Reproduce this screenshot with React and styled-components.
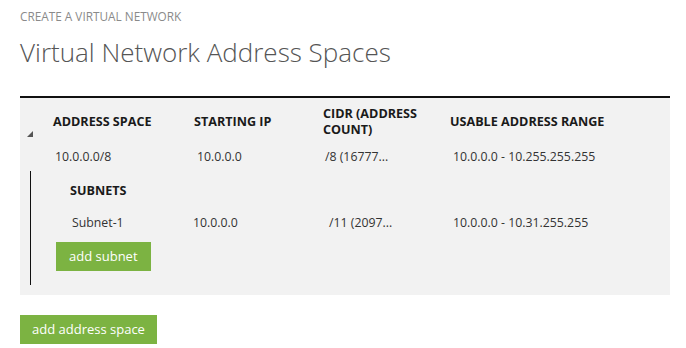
import React from 'react'
import styled, { createGlobalStyle } from 'styled-components'

const GlobalStyle = createGlobalStyle`
  html, body {
    margin: 0;
    padding: 0;
    background: #fff;
  }
  body {
    font-family: "Open Sans", "Noto Sans", "Liberation Sans", sans-serif;
    color: #333;
  }
`

const addressSpaces = [
  {
    space: '10.0.0.0/8',
    start: '10.0.0.0',
    cidr: '/8 (16777...',
    range: '10.0.0.0 - 10.255.255.255',
    subnets: [
      { name: 'Subnet-1', start: '10.0.0.0', cidr: '/11 (2097...', range: '10.0.0.0 - 10.31.255.255' },
    ],
  },
]

function App() {
  return (
    <Page>
      <GlobalStyle />
      <Eyebrow>CREATE A VIRTUAL NETWORK</Eyebrow>
      <Title>Virtual Network Address Spaces</Title>
      {addressSpaces.map(a => (
        <Panel key={a.space}>
          <HeadRow>
            <Toggle>
              <svg width="6" height="6" viewBox="0 0 6 6">
                <polygon points="6,0 6,6 0,6" fill="#555" />
              </svg>
            </Toggle>
            <HeadCell>ADDRESS SPACE</HeadCell>
            <HeadCell>STARTING IP</HeadCell>
            <HeadCell>CIDR (ADDRESS<br />COUNT)</HeadCell>
            <HeadCell>USABLE ADDRESS RANGE</HeadCell>
          </HeadRow>
          <DataRow>
            <span />
            <Cell $shift={2}>{a.space}</Cell>
            <Cell $shift={3}>{a.start}</Cell>
            <Cell $shift={2}>{a.cidr}</Cell>
            <Cell $shift={3}>{a.range}</Cell>
          </DataRow>
          <Subnets>
            <SubnetTitle>SUBNETS</SubnetTitle>
            {a.subnets.map(s => (
              <SubnetRow key={s.name}>
                <Cell>{s.name}</Cell>
                <Cell>{s.start}</Cell>
                <Cell>{s.cidr}</Cell>
                <Cell>{s.range}</Cell>
              </SubnetRow>
            ))}
            <GreenButton $small>add subnet</GreenButton>
          </Subnets>
        </Panel>
      ))}
      <GreenButton>add address space</GreenButton>
    </Page>
  )
}

export default App

const Page = styled.div`
  width: 686px;
  height: 348px;
  box-sizing: border-box;
  padding: 9px 16px 0 20px;
  overflow: hidden;
`

const Eyebrow = styled.div`
  font-size: 11.8px;
  line-height: 15px;
  color: #8a8a8a;
`

const Title = styled.h1`
  margin: 11px 0 0;
  font-size: 26px;
  font-weight: 300;
  line-height: 34px;
  color: #555;
`

const Panel = styled.section`
  margin-top: 27px;
  border-top: 2px solid #111;
  background: #f2f2f2;
  padding-bottom: 10px;
`

const HeadRow = styled.div`
  display: grid;
  grid-template-columns: 33px 141px 129px 127px 1fr;
  align-items: center;
  height: 48px;
`

const Toggle = styled.div`
  align-self: end;
  padding: 0 0 9px 7px;
  line-height: 0;
`

const HeadCell = styled.div`
  font-size: 12.6px;
  font-weight: 700;
  line-height: 16px;
  color: #1a1a1a;
  white-space: nowrap;
`

const DataRow = styled.div`
  display: grid;
  grid-template-columns: 33px 141px 129px 127px 1fr;
  align-items: center;
  height: 22px;
`

const Cell = styled.div`
  font-size: 12.3px;
  line-height: 16px;
  color: #333;
  padding-left: ${p => p.$shift || 0}px;
  white-space: nowrap;
`

const Subnets = styled.div`
  margin: 3px 0 0 10px;
  border-left: 1px solid #111;
  padding: 0 0 14px 0;
  display: flex;
  flex-direction: column;
  align-items: flex-start;
`

const SubnetTitle = styled.div`
  font-size: 12.6px;
  font-weight: 700;
  color: #1a1a1a;
  line-height: 40px;
  padding-left: 39px;
`

const SubnetRow = styled.div`
  display: grid;
  grid-template-columns: 121px 136px 124px 1fr;
  align-items: center;
  height: 24px;
  width: 100%;
  box-sizing: border-box;
  padding-left: 41px;
`

const GreenButton = styled.button`
  display: block;
  border: 0;
  background: #7cb342;
  color: #fff;
  font-family: inherit;
  font-size: 13px;
  line-height: 29px;
  height: 29px;
  padding: 0 ${p => (p.$small ? 13 : 12)}px;
  margin: ${p => (p.$small ? '7px 0 0 25px' : '20px 0 0')};
  cursor: pointer;
`
